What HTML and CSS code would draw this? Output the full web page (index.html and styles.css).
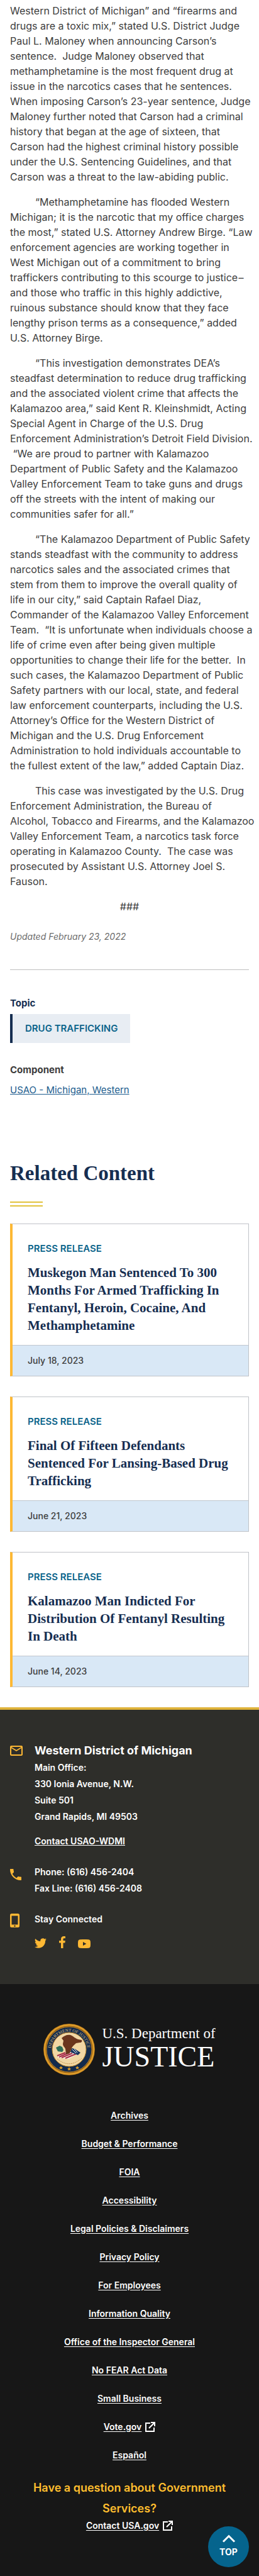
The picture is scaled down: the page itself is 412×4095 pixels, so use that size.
FILE: index.html
```html
<!DOCTYPE html>
<html lang="en">
<head>
<meta charset="utf-8">
<meta name="viewport" content="width=device-width, initial-scale=1">
<title>Western District of Michigan | U.S. Department of Justice</title>
<link rel="stylesheet" href="styles.css">
</head>
<body>
<main class="page">
  <article class="release">
    <p class="lead">Western District of Michigan” and “firearms and<br>
      drugs are a toxic mix,” stated U.S. District Judge<br>
      Paul L. Maloney when announcing Carson’s<br>
      sentence.&nbsp; Judge Maloney observed that<br>
      methamphetamine is the most frequent drug at<br>
      issue in the narcotics cases that he sentences.<br>
      When imposing Carson’s 23-year sentence, Judge<br>
      Maloney further noted that Carson had a criminal<br>
      history that began at the age of sixteen, that<br>
      Carson had the highest criminal history possible<br>
      under the U.S. Sentencing Guidelines, and that<br>
      Carson was a threat to the law-abiding public.</p>
    <p>“Methamphetamine has flooded Western<br>
      Michigan; it is the narcotic that my office charges<br>
      the most,” stated U.S. Attorney Andrew Birge. “Law<br>
      enforcement agencies are working together in<br>
      West Michigan out of a commitment to bring<br>
      traffickers contributing to this scourge to justice&#8202;–<br>
      and those who traffic in this highly addictive,<br>
      ruinous substance should know that they face<br>
      lengthy prison terms as a consequence,” added<br>
      U.S. Attorney Birge.</p>
    <p>“This investigation demonstrates DEA’s<br>
      steadfast determination to reduce drug trafficking<br>
      and the associated violent crime that affects the<br>
      Kalamazoo area,” said Kent R. Kleinshmidt, Acting<br>
      Special Agent in Charge of the U.S. Drug<br>
      Enforcement Administration’s Detroit Field Division.<br>
      &nbsp;“We are proud to partner with Kalamazoo<br>
      Department of Public Safety and the Kalamazoo<br>
      Valley Enforcement Team to take guns and drugs<br>
      off the streets with the intent of making our<br>
      communities safer for all.”</p>
    <p>“The Kalamazoo Department of Public Safety<br>
      stands steadfast with the community to address<br>
      narcotics sales and the associated crimes that<br>
      stem from them to improve the overall quality of<br>
      life in our city,” said Captain Rafael Diaz,<br>
      Commander of the Kalamazoo Valley Enforcement<br>
      Team.&nbsp; “It is unfortunate when individuals choose a<br>
      life of crime even after being given multiple<br>
      opportunities to change their life for the better.&nbsp; In<br>
      such cases, the Kalamazoo Department of Public<br>
      Safety partners with our local, state, and federal<br>
      law enforcement counterparts, including the U.S.<br>
      Attorney’s Office for the Western District of<br>
      Michigan and the U.S. Drug Enforcement<br>
      Administration to hold individuals accountable to<br>
      the fullest extent of the law,” added Captain Diaz.</p>
    <p>This case was investigated by the U.S. Drug<br>
      Enforcement Administration, the Bureau of<br>
      Alcohol, Tobacco and Firearms, and the Kalamazoo<br>
      Valley Enforcement Team, a narcotics task force<br>
      operating in Kalamazoo County.&nbsp; The case was<br>
      prosecuted by Assistant U.S. Attorney Joel S.<br>
      Fauson.</p>
    <p class="end-mark">###</p>
    <p class="updated">Updated February 23, 2022</p>
  </article>

  <section class="meta">
    <h2 class="meta-label meta-label-navy">Topic</h2>
    <a class="tag" href="#">DRUG TRAFFICKING</a>
    <h2 class="meta-label">Component</h2>
    <a class="component" href="#">USAO - Michigan, Western</a>
  </section>

  <section class="related">
    <h2 class="related-title">Related Content</h2>
    <div class="rule"></div>
    <div class="cards">
      <article class="card">
        <div class="card-body">
          <p class="card-type">PRESS RELEASE</p>
          <h3><a href="#">Muskegon Man Sentenced To 300 Months For Armed Trafficking In Fentanyl, Heroin, Cocaine, And Methamphetamine</a></h3>
        </div>
        <time class="card-date" datetime="2023-07-18">July 18, 2023</time>
      </article>
      <article class="card">
        <div class="card-body">
          <p class="card-type">PRESS RELEASE</p>
          <h3><a href="#">Final Of Fifteen Defendants Sentenced For Lansing-Based Drug Trafficking</a></h3>
        </div>
        <time class="card-date" datetime="2023-06-21">June 21, 2023</time>
      </article>
      <article class="card">
        <div class="card-body">
          <p class="card-type">PRESS RELEASE</p>
          <h3><a href="#">Kalamazoo Man Indicted For Distribution Of Fentanyl Resulting In Death</a></h3>
        </div>
        <time class="card-date" datetime="2023-06-14">June 14, 2023</time>
      </article>
    </div>
  </section>
</main>

<footer>
  <section class="office">
    <div class="office-row">
      <svg class="icon icon-mail" viewBox="0 0 20 16" width="20" height="16" aria-hidden="true"><path d="M18 0H2C.9 0 0 .9 0 2v12c0 1.100.9 2 2 2h16c1.100 0 2-.9 2-2V2c0-1.100-.9-2-2-2zm0 14H2V4l8 5 8-5v10zm-8-7L2 2h16l-8 5z"/></svg>
      <div>
        <h2 class="office-name">Western District of Michigan</h2>
        <address>Main Office:<br>330 Ionia Avenue, N.W.<br>Suite 501<br>Grand Rapids, MI 49503</address>
        <a class="office-link" href="#">Contact USAO-WDMI</a>
      </div>
    </div>
    <div class="office-row">
      <svg class="icon icon-phone" viewBox="3 3 18 18" width="18" height="18" aria-hidden="true"><path d="M6.620 10.790c1.440 2.830 3.760 5.140 6.590 6.590l2.200-2.200c.27-.27.67-.36 1.020-.24 1.120.37 2.330.57 3.570.57.550 0 1 .45 1 1V20c0 .55-.45 1-1 1C10.610 21 3 13.390 3 4c0-.55.45-1 1-1h3.500c.55 0 1 .45 1 1 0 1.250.2 2.450.57 3.570.110.350.030.740-.25 1.020l-2.200 2.200z"/></svg>
      <div>Phone: (616) 456-2404<br>Fax Line: (616) 456-2408</div>
    </div>
    <div class="office-row">
      <svg class="icon icon-device" viewBox="0 0 15 22" width="15" height="22" aria-hidden="true"><path fill-rule="evenodd" d="M2.500 0h10A2.500 2.500 0 0 1 15 2.500v17a2.500 2.500 0 0 1-2.500 2.500h-10A2.500 2.500 0 0 1 0 19.500v-17A2.500 2.500 0 0 1 2.500 0zM2.500 3.500v14h10v-14zM7.500 18.600a1.200 1.200 0 1 0 0 2.400 1.200 1.200 0 0 0 0-2.400z"/></svg>
      <div>
        <p class="stay">Stay Connected</p>
        <div class="social">
          <a href="#" aria-label="Twitter"><svg viewBox="0 0 24 20" width="19" height="16"><path d="M23.950 2.570a10 10 0 0 1-2.820.77 4.960 4.960 0 0 0 2.160-2.720c-.95.550-2 .950-3.130 1.190a4.920 4.920 0 0 0-8.380 4.480C7.690 6.090 4.070 4.130 1.640 1.160a4.920 4.920 0 0 0 1.520 6.570 4.900 4.900 0 0 1-2.230-.61v.06c0 2.390 1.700 4.380 3.950 4.830a5 5 0 0 1-2.210.08 4.940 4.940 0 0 0 4.600 3.420A9.870 9.870 0 0 1 0 17.540a13.990 13.990 0 0 0 7.560 2.210c9.050 0 14-7.500 14-13.980 0-.21 0-.42-.02-.63a9.940 9.940 0 0 0 2.410-2.570z"/></svg></a>
          <a href="#" aria-label="Facebook"><svg viewBox="0 0 10 19" width="10" height="19"><path d="M10 .2V3.200H8.200C6.800 3.200 6.500 3.900 6.500 4.900V7H9.800l-.4 3.400H6.500V19H3V10.400H0V7h3V4.500C3 1.600 4.800 0 7.400 0c1.200 0 2.300.1 2.600.2z"/></svg></a>
          <a href="#" aria-label="YouTube"><svg viewBox="0 0 20 14" width="20" height="14"><path fill-rule="evenodd" d="M3 .2Q10-.3 17 .2 19.500.4 19.800 3 20.200 7 19.800 11 19.500 13.600 17 13.800 10 14.300 3 13.800.5 13.600.2 11-.2 7 .2 3 .5.400 3 .2zM8 4v6l5.400-3z"/></svg></a>
        </div>
      </div>
    </div>
  </section>

  <section class="doj">
    <a class="brand" href="#">
      <svg class="seal" viewBox="0 0 82 82" width="82" height="82" role="img" aria-label="Department of Justice seal">
        <defs><path id="ring" d="M12.500 47A29 29 0 1 1 69.500 47"/></defs>
        <circle cx="41" cy="41" r="41" fill="#8a5a17"/>
        <circle cx="41" cy="41" r="39" fill="none" stroke="#dc9a28" stroke-width="3"/>
        <circle cx="41" cy="41" r="36" fill="#132a4c"/>
        <circle cx="41" cy="41" r="36" fill="none" stroke="#bd8427" stroke-width="1"/>
        <text class="seal-text"><textPath href="#ring" startOffset="50%" text-anchor="middle">DEPARTMENT OF JUSTICE</textPath></text>
        <circle cx="41" cy="41" r="27" fill="#f1d6a4" stroke="#bd8427" stroke-width="1"/>
        <g fill="#dc9a28"><path d="M41 69l1 2h2l-1.500 1.500.5 2-2-1-2 1 .5-2L38 71h2z"/><path d="M28 67l1 2h2l-1.500 1.500.5 2-2-1-2 1 .5-2L25 69h2z"/><path d="M54 67l1 2h2l-1.500 1.500.5 2-2-1-2 1 .5-2L51 69h2z"/></g>
        <path d="M20 38l6-3 4 2 2 5-2 3-7-1z" fill="#2d6e57"/>
        <path d="M22 51l17-7 16 4-15 8-16-2z" fill="#f3efe6"/>
        <path d="M22 51l13-5M25 53l16-7M29 54l17-7M35 55l17-7" stroke="#a82a44" stroke-width="2" fill="none"/>
        <path d="M45 39l5 1 9 6-4 4-12-5z" fill="#17345f"/>
        <path d="M46 41l6 6M49 40l5 6" stroke="#fff" stroke-width="1"/>
        <path d="M29 23c4-4 9-6 14-5 5 2 8 6 13 7l5 1c1 2 0 4-3 4l-6 1c-3 3-5 4-7 8l-3 8-6 2-1-9c-1-3-4-4-4-8l1-5z" fill="#6a351d"/>
        <path d="M22 56q19 16 39-1" stroke="#c5914a" stroke-width="1" stroke-dasharray="2 1" fill="none"/>
      </svg>
      <span class="brand-text"><span class="brand-small">U.S. Department of</span><span class="brand-large">JUSTICE</span></span>
    </a>
    <nav>
      <ul class="links">
        <li><a href="#">Archives</a></li>
        <li><a href="#">Budget &amp; Performance</a></li>
        <li><a href="#">FOIA</a></li>
        <li><a href="#">Accessibility</a></li>
        <li><a href="#">Legal Policies &amp; Disclaimers</a></li>
        <li><a href="#">Privacy Policy</a></li>
        <li><a href="#">For Employees</a></li>
        <li><a href="#">Information Quality</a></li>
        <li><a href="#">Office of the Inspector General</a></li>
        <li><a href="#">No FEAR Act Data</a></li>
        <li><a href="#">Small Business</a></li>
        <li><a href="#">Vote.gov</a><svg class="ext" viewBox="0 0 16 16" width="16" height="16" aria-hidden="true"><path d="M8 2H1v13h13V9M6 10l8-8M9 1h6v6"/></svg></li>
        <li><a href="#">Español</a></li>
      </ul>
    </nav>
    <p class="question">Have a question about Government Services?</p>
    <p class="usagov"><a href="#">Contact USA.gov</a><svg class="ext" viewBox="0 0 16 16" width="16" height="16" aria-hidden="true"><path d="M8 2H1v13h13V9M6 10l8-8M9 1h6v6"/></svg></p>
    <a class="top" href="#"><svg viewBox="0 0 22 13" width="22" height="13" aria-hidden="true"><path d="M2 11.500l9-9 9 9"/></svg>TOP</a>
  </section>
</footer>
</body>
</html>
```
FILE: styles.css
```css
* { box-sizing: border-box; }

body {
  margin: 0;
  background: #fff;
  color: #3d3d3d;
  font-family: Inter, "Open Sans", sans-serif;
  font-size: 16px;
  line-height: 24px;
}

h2, h3, p, ul { margin: 0; padding: 0; }

.page { padding: 5px 16px 32px; }

.release {
  padding-bottom: 40px;
  border-bottom: 1px solid #bfbfbf;
}
.release p {
  margin: 0 -12px 16px 0;
  text-indent: 40px;
}
.release .lead { text-indent: 0; }
.release .end-mark {
  margin: 0 0 24px;
  text-indent: 0;
  text-align: center;
}
.release .updated {
  margin: 0;
  color: #6b6b6b;
  font-size: 14px;
  font-style: italic;
  text-indent: 0;
}

.meta {
  display: flex;
  flex-direction: column;
  align-items: flex-start;
  padding-top: 41px;
}
.meta-label {
  font-size: 15px;
  font-weight: 700;
  line-height: 24px;
}
.meta-label-navy { color: #162e51; }
.tag {
  margin: 5px 0 31px;
  padding: 11px 20px;
  border-left: 4px solid #162e51;
  background: #e8edf3;
  color: #0b648b;
  font-size: 15px;
  font-weight: 600;
  text-decoration: none;
}
.component {
  margin-top: 8px;
  color: #215d8e;
  font-size: 15px;
}

.related { padding-top: 96px; }
.related-title {
  color: #162e51;
  font-family: "Liberation Serif", serif;
  font-size: 33px;
  font-weight: 700;
  line-height: 48px;
}
.rule {
  width: 52px;
  height: 8px;
  margin: 21px 0 27px;
  border: solid #e2c33c;
  border-width: 2px 0;
}
.cards {
  display: flex;
  flex-direction: column;
  gap: 32px;
}
.card {
  border: 1px solid #c0c3c8;
  border-left: 4px solid #fdb834;
}
.card-body { padding: 27px 24px 17px; }
.card-type {
  margin-bottom: 12px;
  color: #0b648b;
  font-size: 15px;
  font-weight: 600;
}
.card h3 {
  font-family: "Liberation Serif", serif;
  font-size: 21px;
  font-weight: 700;
  line-height: 28px;
}
.card h3 a {
  color: #162e51;
  text-decoration: none;
}
.card-date {
  display: block;
  padding: 12px 24px;
  border-top: 1px solid #c0c7cf;
  background: #d9e8f6;
  font-size: 14px;
  font-weight: 500;
}

.office {
  display: flex;
  flex-direction: column;
  gap: 23px;
  padding: 51px 16px 57px;
  border-top: 4px solid #dfb33b;
  background: #2e2e2a;
  color: #fff;
  font-size: 14px;
  font-weight: 600;
  line-height: 26px;
}
.office-row {
  display: grid;
  grid-template-columns: 39px 1fr;
}
.icon, .social svg { fill: #fdb834; }
.icon-mail { margin-top: 6px; }
.icon-phone { margin-top: 8px; }
.icon-device { margin-top: 4px; }
.office-name {
  font-size: 18px;
  font-weight: 700;
  line-height: 28px;
}
address { font-style: normal; }
.office-link {
  display: inline-block;
  margin-top: 13px;
  color: #fff;
}
.social {
  display: flex;
  align-items: flex-end;
  gap: 20px;
  margin-top: 14px;
}
.social a { display: flex; }

.doj {
  position: relative;
  padding: 63px 16px 69px;
  background: #171717;
  color: #fff;
  text-align: center;
}
.brand {
  display: flex;
  align-items: center;
  justify-content: center;
  gap: 11px;
  color: #fff;
  text-decoration: none;
}
.seal { flex: none; }
.seal-text {
  fill: #d8b878;
  font-family: "Liberation Serif", serif;
  font-size: 7px;
}
.brand-text {
  display: flex;
  flex-direction: column;
  text-align: left;
  font-family: "Liberation Serif", serif;
}
.brand-small { font-size: 23px; line-height: 24px; }
.brand-large { font-size: 46px; line-height: 50px; }
.links {
  padding-top: 41px;
  list-style: none;
}
.links li, .usagov {
  display: flex;
  align-items: center;
  justify-content: center;
  gap: 6px;
  height: 45px;
  font-size: 14px;
  font-weight: 600;
}
.links a, .usagov a {
  color: #fff;
  text-underline-offset: 2px;
}
.ext {
  fill: none;
  stroke: #fff;
  stroke-width: 2;
}
.question {
  margin-top: 13px;
  color: #ffbe2e;
  font-size: 18px;
  font-weight: 600;
  line-height: 33px;
}
.usagov { height: 22px; }
.top {
  position: absolute;
  right: 16px;
  bottom: 14px;
  display: flex;
  flex-direction: column;
  align-items: center;
  justify-content: center;
  gap: 3px;
  width: 65px;
  height: 65px;
  border-radius: 50%;
  background: #05648d;
  color: #fff;
  font-size: 14px;
  font-weight: 700;
  text-decoration: none;
}
.top path {
  fill: none;
  stroke: #fff;
  stroke-width: 3;
}
```
